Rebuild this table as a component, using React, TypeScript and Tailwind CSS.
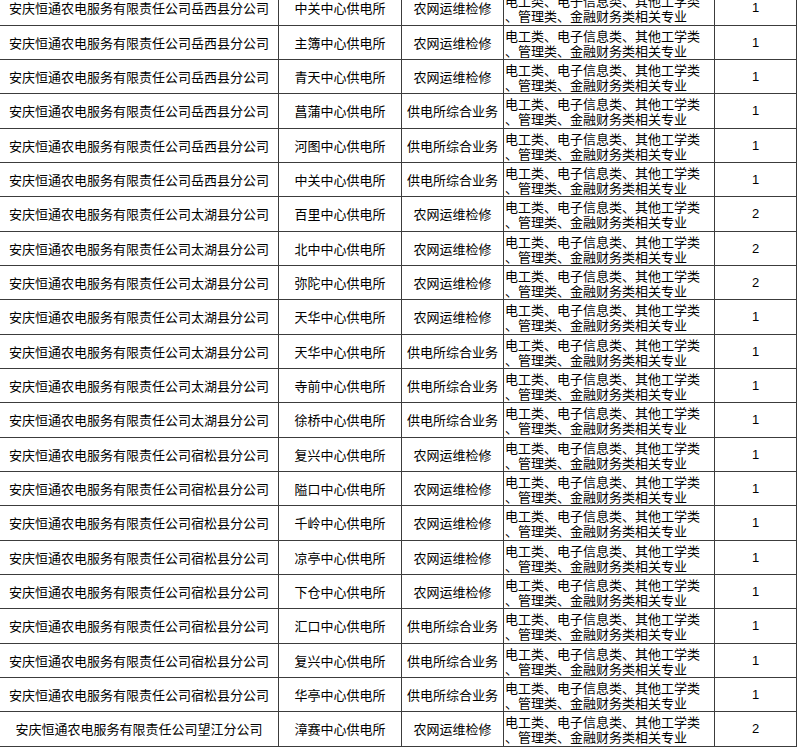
import React from "react";

type Row = [string, string, string, number];

const rows: Row[] = [
  ["岳西县", "中关中心供电所", "农网运维检修", 1],
  ["岳西县", "主簿中心供电所", "农网运维检修", 1],
  ["岳西县", "青天中心供电所", "农网运维检修", 1],
  ["岳西县", "菖蒲中心供电所", "供电所综合业务", 1],
  ["岳西县", "河图中心供电所", "供电所综合业务", 1],
  ["岳西县", "中关中心供电所", "供电所综合业务", 1],
  ["太湖县", "百里中心供电所", "农网运维检修", 2],
  ["太湖县", "北中中心供电所", "农网运维检修", 2],
  ["太湖县", "弥陀中心供电所", "农网运维检修", 2],
  ["太湖县", "天华中心供电所", "农网运维检修", 1],
  ["太湖县", "天华中心供电所", "供电所综合业务", 1],
  ["太湖县", "寺前中心供电所", "供电所综合业务", 1],
  ["太湖县", "徐桥中心供电所", "供电所综合业务", 1],
  ["宿松县", "复兴中心供电所", "农网运维检修", 1],
  ["宿松县", "隘口中心供电所", "农网运维检修", 1],
  ["宿松县", "千岭中心供电所", "农网运维检修", 1],
  ["宿松县", "凉亭中心供电所", "农网运维检修", 1],
  ["宿松县", "下仓中心供电所", "农网运维检修", 1],
  ["宿松县", "汇口中心供电所", "供电所综合业务", 1],
  ["宿松县", "复兴中心供电所", "供电所综合业务", 1],
  ["宿松县", "华亭中心供电所", "供电所综合业务", 1],
  ["望江", "漳赛中心供电所", "农网运维检修", 2],
];

const cell = "flex items-center justify-center border-r border-[#3c3c3c] whitespace-nowrap";

export default function App() {
  return (
    <div
      className="w-[797px] h-[748px] overflow-hidden bg-white text-[13px] text-[#000]"
      style={{ fontFamily: '"Noto Sans CJK SC", "Liberation Sans", sans-serif' }}
    >
      <div className="-mt-[9px] flex flex-col">
        {rows.map((r, i) => (
          <div
            key={i}
            className={`grid grid-cols-[279px_123px_102px_211px_82px] border-b border-[#3c3c3c] ${
              i % 3 === 0 ? "h-[35px]" : "h-[34px]"
            }`}
          >
            <div className={cell}>安庆恒通农电服务有限责任公司{r[0]}分公司</div>
            <div className={cell}>{r[1]}</div>
            <div className={cell}>{r[2]}</div>
            <div className="flex flex-col justify-center border-r border-[#3c3c3c] pl-px leading-[15px] whitespace-nowrap">
              <span>电工类、电子信息类、其他工学类</span>
              <span>、管理类、金融财务类相关专业</span>
            </div>
            <div
              className={cell}
              style={{ fontFamily: '"Liberation Sans", sans-serif' }}
            >
              {r[3]}
            </div>
          </div>
        ))}
      </div>
    </div>
  );
}
